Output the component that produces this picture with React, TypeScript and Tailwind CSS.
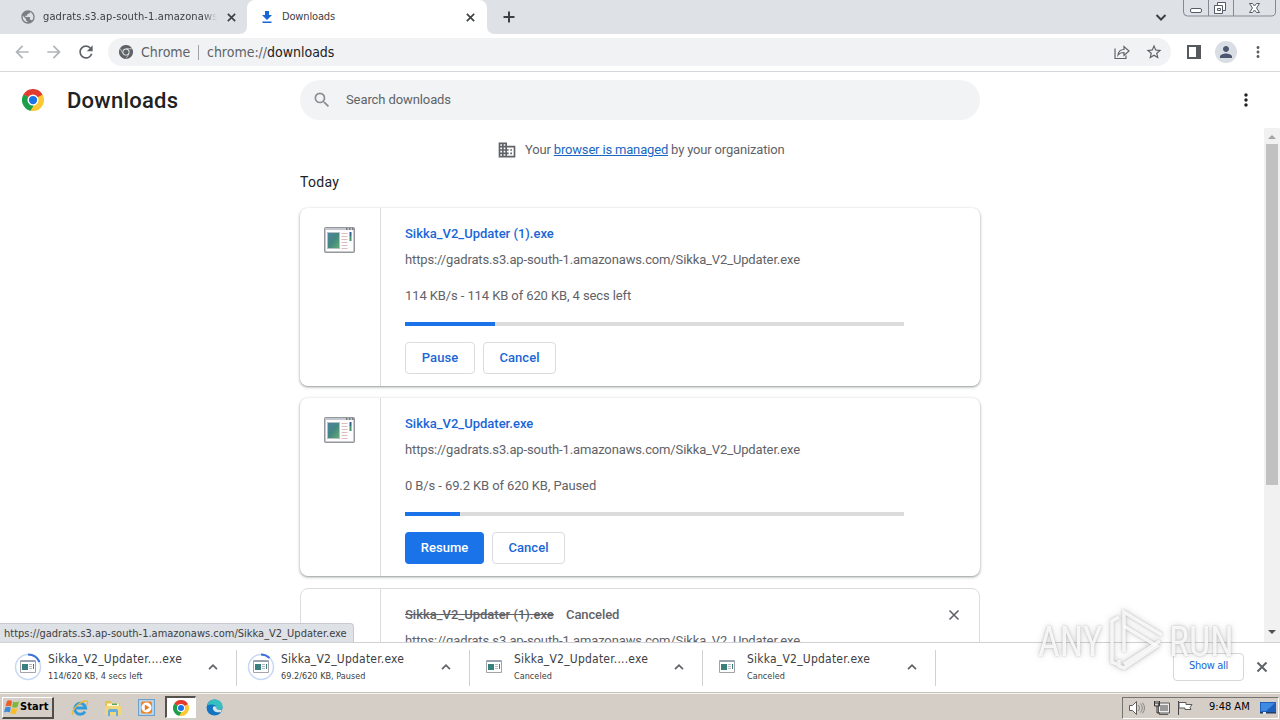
import type { ReactNode } from 'react';
import {
  MdArrowBack, MdArrowForward, MdRefresh, MdStarBorder, MdPerson, MdMoreVert, MdSearch,
  MdBusiness, MdPublic,
} from 'react-icons/md';

const URL_TEXT = 'https://gadrats.s3.ap-south-1.amazonaws.com/Sikka_V2_Updater.exe';

function Glyph({ d, className, width = 2 }: { d: string; className: string; width?: number }) {
  return (
    <svg className={className} viewBox="0 0 16 16" fill="none" stroke="currentColor" strokeWidth={width}>
      <path d={d} />
    </svg>
  );
}

const CROSS = 'M3.500 3.500l9 9M12.500 3.500l-9 9';
const PLUS = 'M8 2.500v11M2.500 8h11';
const UP = 'M3.500 10.500 8 6l4.500 4.500';
const DOWN = 'M3.500 6 8 10.500 12.500 6';

function ChromeLogo({ className, mono = false }: { className: string; mono?: boolean }) {
  const c = mono ? ['#5f6368', '#5f6368', '#5f6368', '#5f6368'] : ['#e33b2e', '#fcc934', '#1e9e4a', '#1a73e8'];
  const gap = mono ? '#f1f3f4' : 'none';
  return (
    <svg className={className} viewBox="0 0 48 48">
      <path d="M24 24 3.2 12A24 24 0 0 1 44.8 12Z" fill={c[0]} />
      <path d="M24 24 44.8 12A24 24 0 0 1 24 48Z" fill={c[1]} />
      <path d="M24 24V48A24 24 0 0 1 3.2 12Z" fill={c[2]} />
      <path d="M24 12H44.8L24 24Z" fill={c[0]} />
      <path d="M34.4 30 24 48 24 24Z" fill={c[1]} />
      <path d="M13.6 30 3.2 12 24 24Z" fill={c[2]} />
      <path d="M34.4 30 24 48H18L28 32Z" fill={c[1]} />
      <path d="M24 12.5H44M34 30 24 47M14 30 4 13" stroke={gap} strokeWidth="2" fill="none" />
      <circle cx="24" cy="24" r="12" fill={mono ? '#f1f3f4' : '#fff'} />
      <circle cx="24" cy="24" r="9" fill={c[3]} />
    </svg>
  );
}

function AppIcon({ className }: { className: string }) {
  return (
    <svg className={className} viewBox="0 0 31 26" preserveAspectRatio="none">
      <defs>
        <linearGradient id="pane" x1="0" y1="0" x2="1" y2="1">
          <stop offset="0" stopColor="#4c83a5" />
          <stop offset=".5" stopColor="#43877f" />
          <stop offset="1" stopColor="#64ad76" />
        </linearGradient>
      </defs>
      <rect x=".75" y=".75" width="29.5" height="24.5" rx="1" fill="#fdfdfd" stroke="#94979c" strokeWidth="1.5" />
      <path d="M1 2h29" stroke="#c3c7cd" strokeWidth="2" />
      <path d="M22 2h1.500M25 2h1.500M28 2h1.500" stroke="#5d6068" strokeWidth="1.500" />
      <rect x="3.500" y="5.500" width="12" height="16" fill="url(#pane)" stroke="#b9c0c4" />
      <path d="M17.500 6.500h6M17.500 9.500h6M17.500 12.500h6M17.500 15.500h6M17.500 18.500h6M17.500 21.500h6" stroke="#dcbcbc" />
      <path d="M26.500 5v4" stroke="#305f91" strokeWidth="2" />
      <path d="M26.500 9v5" stroke="#45936a" strokeWidth="2" />
    </svg>
  );
}

function SmallAppIcon() {
  return (
    <svg className="h-[13px] w-4" viewBox="0 0 16 13">
      <path d="M.5.5h15v12H.5z" fill="#fff" stroke="#a3a3a8" />
      <path d="M1 1.500h14" stroke="#8ea4bd" />
      <path d="M2 4h6v6H2z" fill="#38807d" />
      <path d="M9 4.500h3M9 6.500h3M9 8.500h3" stroke="#b4b9b9" />
      <path d="M13.500 4v5" stroke="#3f7f84" />
    </svg>
  );
}

function Card({ name, status, bar, action, primary }: {
  name: string; status: string; bar: ReactNode; action: string; primary?: boolean;
}) {
  return (
    <section className="flex h-[178px] shrink-0 rounded-lg bg-white shadow-[0_1px_2px_rgba(60,64,67,.4),0_1px_3px_1px_rgba(60,64,67,.15)]">
      <div className="flex w-[81px] justify-center border-r border-[#dadce0] pt-[19px]">
        <AppIcon className="ml-[-2px] h-[26px] w-[31px]" />
      </div>
      <div className="flex flex-1 flex-col pl-6 pt-4 text-[13px] leading-5 text-[#5f6368]">
        <a className="font-medium tracking-[0px] text-[#1a66d6]">{name}</a>
        <p className="mt-1.5 tracking-[-0.13px]">{URL_TEXT}</p>
        <p className="mt-4 tracking-[-0.1px]">{status}</p>
        <div className="mt-4 h-1 w-[499px] bg-[#dcdcdc]">{bar}</div>
        <div className="mt-4 flex gap-2 font-medium tracking-[0.05px]">
          <button className={primary
            ? 'h-8 w-[79px] rounded bg-[#1a73e8] text-white'
            : 'h-8 w-[70px] rounded border border-[#dadce0] text-[#1a66d6]'}>{action}</button>
          <button className="h-8 w-[73px] rounded border border-[#dadce0] text-[#1a66d6]">Cancel</button>
        </div>
      </div>
    </section>
  );
}

function ShelfItem({ name, sub, arc }: { name: string; sub: string; arc?: string }) {
  return (
    <div className="flex h-9 w-[233px] shrink-0 items-center border-r border-[#cfd1d4]">
      <div className="relative ml-[10px] mt-[-2px] flex h-7 w-7 items-center justify-center">
        <SmallAppIcon />
        {arc && (
          <svg className="absolute inset-0 h-7 w-7" viewBox="0 0 28 28" fill="none" strokeWidth="2">
            <circle cx="14" cy="14" r="12.500" stroke="#c6d8f5" strokeWidth="1.500" />
            <path d={arc} stroke="#3f72d8" />
          </svg>
        )}
      </div>
      <div className="ml-[6px] w-[150px] whitespace-nowrap text-[#3c4043]">
        <div className="h-[17px] text-[12px] leading-[17px] tracking-[0.22px]">{name}</div>
        <div className="h-[17px] text-[9px] leading-[17px] tracking-[0.04px]">{sub}</div>
      </div>
      <Glyph d={UP} className="ml-[8px] mt-[-2px] h-[14px] w-[14px] text-[#5f6368]" />
    </div>
  );
}

function TabStrip() {
  return (
    <div className="flex h-[34px] items-start bg-[#dee1e6] text-[11px] text-[#3c4043] [&>*]:shrink-0">
      <div className="flex h-[34px] w-[239px] items-center pl-5">
        <MdPublic className="h-4 w-4 shrink-0 text-[#7b7f84]" />
        <span className="ml-[7px] w-[174px] shrink-0 overflow-hidden whitespace-nowrap tracking-[0.12px] [mask-image:linear-gradient(to_right,black_92%,transparent)]">gadrats.s3.ap-south-1.amazonaws.com</span>
        <Glyph d={CROSS} className="ml-[8px] h-[13px] w-[13px] shrink-0" />
      </div>
      <svg className="h-[34px] w-2" viewBox="0 0 8 34"><path d="M0 34Q8 34 8 26V34Z" fill="#fff" /></svg>
      <div className="flex h-[34px] w-[240px] items-center rounded-t-lg bg-white">
        <svg className="ml-[13px] h-[14px] w-[14px]" viewBox="0 0 14 14"><path d="M5 1h4v4h3L7 10 2 5h3zM2.500 11.500h9v1.500h-9z" fill="#1967d2" /></svg>
        <span className="ml-2 w-[182px] tracking-[-0.15px]">Downloads</span>
        <Glyph d={CROSS} className="h-[13px] w-[13px]" />
      </div>
      <svg className="h-[34px] w-2" viewBox="0 0 8 34"><path d="M0 26Q0 34 8 34H0Z" fill="#fff" /></svg>
      <Glyph d={PLUS} className="ml-[6px] mt-[9px] h-4 w-4" />
      <Glyph d={DOWN} className="ml-[636px] mt-[9px] h-4 w-4" />
      <svg className="ml-[14px] h-[18px] w-[94px]" viewBox="0 0 94 18" fill="none" stroke="#555b66">
        <path d="M.5 0v12q0 4 4 4H88q4.500 0 4.500-4V0M25.500 0v16M50.500 0v16" stroke="#858994" />
        <rect x="7.500" y="8.500" width="11" height="4" rx="1.500" fill="#fff" />
        <path d="M34.500 2.500h8v8h-3v3h-8v-8h3zM34.500 8.500h3v2h-3zM34.500 5.500h5v5" fill="#fff" />
        <path d="m66.500 3.500h3l2 2.500 2-2.500h3l-3 4.500 3 4.500h-3l-2-2.500-2 2.500h-3l3-4.500z" fill="#fff" />
      </svg>
    </div>
  );
}

function Toolbar() {
  return (
    <div className="flex h-[38px] items-center border-b border-[#d5d7da] bg-white pb-px text-[#5f6368]">
      <MdArrowBack className="ml-3 h-5 w-5 text-[#b2b5b8]" />
      <MdArrowForward className="ml-3 h-5 w-5 text-[#b2b5b8]" />
      <MdRefresh className="ml-3 h-5 w-5" />
      <div className="ml-[12px] flex h-[28px] w-[1063px] items-center rounded-full bg-[#f0f2f4] text-[14px]">
        <ChromeLogo className="ml-[11px] h-[14px] w-[14px]" mono />
        <span className="ml-2 w-[57px] tracking-[0px]">Chrome</span>
        <span className="h-[15px] w-px bg-[#9ea2a7]" />
        <span className="ml-2 w-[907px] tracking-[-0.02px]">chrome://<span className="text-[#202124]">downloads</span></span>
        <svg className="h-[15px] w-4" viewBox="0 0 16 15" fill="none" stroke="#5f6368" strokeWidth="1.200"><path d="M1 3.500v10h11v-3M4 10c.5-4 3-5.500 6-5.500v-3l5 4.500-5 4.500v-3c-3 0-4.500.5-6 2.500z" /></svg>
        <MdStarBorder className="ml-[15px] h-[18px] w-[18px] shrink-0" />
      </div>
      <svg className="ml-[16px] h-[14px] w-[14px]" viewBox="0 0 14 14"><path d="M0 0h14v14H0zM2 2v10h7V2z" fill="#55595e" fillRule="evenodd" /></svg>
      <span className="ml-[14px] flex h-[22px] w-[22px] items-center justify-center rounded-full bg-[#d9dde4]"><MdPerson className="h-[18px] w-[18px] text-[#4b5670]" /></span>
      <MdMoreVert className="ml-[12px] h-[18px] w-[18px]" />
    </div>
  );
}

function Taskbar() {
  return (
    <footer className="flex h-7 items-center border-t border-[#c5c3be] bg-[#d5cec6] text-[11px] text-black shadow-[inset_0_1px_0_#f5f2ee]">
      <button className="ml-[2px] mt-[2px] flex h-[22px] w-[52px] items-center border border-b-2 border-r-2 border-[#fff] border-b-[#504c48] border-r-[#504c48] pl-px font-bold">
        <svg className="h-4 w-4 shrink-0" viewBox="0 0 16 16">
          <path d="M3 2q3-1.500 5 .2L7 7.500Q4.500 6 1.500 7.500z" fill="#ec5b2a" />
          <path d="M9 2.800q3 1.200 6-.5L13.500 8q-3 1.500-5.500 0z" fill="#7cb93b" />
          <path d="M1.300 8.500q3-1.500 5.500 0l-1 5Q3 12 0 13.500z" fill="#3c8ad8" />
          <path d="M7.800 9q2.500 1.500 5.500.3L12 14.500q-3 1.300-5.500-.3z" fill="#f6bd26" />
        </svg>
        <span className="tracking-[0.1px]">Start</span>
      </button>
      <svg className="ml-[17px] mt-[2px] h-[18px] w-[18px]" viewBox="0 0 18 18" fill="none">
        <path d="M14 12.500a5.500 5.500 0 1 1 .7-3.500H5" stroke="#2f9bdc" strokeWidth="2.800" />
        <path d="M2 15.500C-.5 13 7 3.500 14 2q4-.5 2 4" stroke="#e9b93c" strokeWidth="1.300" />
      </svg>
      <svg className="ml-[15px] mt-[2px] h-[18px] w-[18px]" viewBox="0 0 18 18">
        <path d="M1 2h6l1 2h8v11H1z" fill="#e3c05c" /><path d="M3 4.500h12V9H3z" fill="#fff6cf" /><path d="M8 4.500h5v1.500H8z" fill="#58a860" />
        <path d="M1 7h16v9H1z" fill="#f1d67c" /><path d="M4 17v-5q0-2 2-2h6q2 0 2 2v5h-2v-4H6v4z" fill="#64aedb" />
      </svg>
      <svg className="ml-[16px] mt-[2px] h-[17px] w-[17px]" viewBox="0 0 17 17">
        <rect x=".5" y=".5" width="16" height="16" fill="#b6d3ea" stroke="#6f9ec7" /><rect x="3" y="2.500" width="11" height="12" rx="2" fill="#f08220" />
        <circle cx="8.500" cy="8.500" r="5" fill="#fff" /><path d="m6.800 5.500 4.700 3-4.700 3z" fill="#e9781c" />
      </svg>
      <span className="ml-[10px] mt-[1px] flex h-[22px] w-[31px] items-center justify-center border border-l-2 border-t-2 border-white border-l-[#55514d] border-t-[#55514d] bg-white"><ChromeLogo className="h-4 w-4" /></span>
      <svg className="ml-[10px] mt-[2px] h-[17px] w-[17px]" viewBox="0 0 17 17">
        <circle cx="8.500" cy="8.500" r="8" fill="#1474c4" />
        <path d="M1 7C2 2 6 .5 9 .5c5 0 8 4 7.500 7.500-.3 2-2 3-4.500 3-1.500 0-2-.7-1.500-1.800C11 6 5 4 1 7z" fill="#37bfc0" />
        <path d="M7 8c-1 4 3 6 8 5l1-2.500c-2.500 1-6 .5-5.500-1.500C10.500 7.500 8 6.500 7 8z" fill="#d5e5e5" />
      </svg>
      <div className="ml-auto mr-px mt-[2px] flex h-[22px] w-[157px] items-center border border-white border-l-[#77736e] border-t-[#77736e]">
        <svg className="ml-[5px] h-4 w-[68px]" viewBox="0 0 68 16" fill="none" stroke="#5b5b5b">
          <path d="M1.500 5.500h3l4-4v13l-4-4h-3z" fill="#fff" /><path d="M10.500 5q2 3 0 6M12.500 3.500q3.500 4.500 0 9M14.500 2.500q4 5.500 0 11" stroke="#888" />
          <path d="M30.500 3h11v10h-11zM31 14.500h9" fill="#eee" /><path d="M32 5h8v6h-8z" fill="#999" stroke="none" /><path d="M26.500 1v5h5V1M28 1v3M30 1v3M29 6v7h3" stroke="#333" />
          <path d="M50.500 1v14" stroke="#444" /><path d="M51 2.500h7v2h6l-2 3 1 2h-6v-1.500h-6z" fill="#fff" />
        </svg>
        <span className="ml-[13px] w-[44px] whitespace-nowrap tracking-[0px]">9:48 AM</span>
        <svg className="ml-[7px] h-[14px] w-4" viewBox="0 0 16 14"><path d="M0 1h16v10H0z" fill="#1e5fbd" /><path d="M1 2h14l-9 8H1z" fill="#3d8be0" /><path d="M0 11h16v1.500H0z" fill="#233c61" /><path d="M3 11h3v2H3z" fill="#dfe9f5" /></svg>
      </div>
    </footer>
  );
}

function Watermark() {
  return (
    <div className="pointer-events-none absolute left-[1038px] top-[608px] z-20 flex h-[66px] w-[196px] items-center font-['Roboto'] text-[43px] font-normal leading-none text-white/85 [filter:drop-shadow(0_0_1px_rgba(90,90,90,.4))_drop-shadow(0_0_3px_rgba(90,90,90,.3))] [font-stretch:condensed]">
      <span className="w-[69px]"><span className="inline-block origin-left scale-x-[.88]">ANY</span></span>
      <svg className="h-[66px] w-[62px] shrink-0" viewBox="0 0 62 66" fill="none" stroke="#fff" strokeOpacity=".85" strokeWidth="3.500">
        <path d="M17 44V4L55 27M53 33 17 56" />
        <path d="m17 18 33 20-33 22-5-2v-6M12 9 5 13v41l7 3" />
      </svg>
      <span className="w-[62px]"><span className="inline-block origin-left scale-x-[.88]">RUN</span></span>
    </div>
  );
}

export default function App() {
  return (
    <div className="relative flex h-[720px] w-[1280px] flex-col overflow-hidden bg-white font-['DejaVu_Sans_Condensed','DejaVu_Sans',sans-serif] [font-stretch:condensed]">
      <TabStrip />
      <Toolbar />
      <header className="flex h-14 shrink-0 items-center font-['Roboto',sans-serif] [font-stretch:normal]">
        <ChromeLogo className="ml-[22px] h-[22px] w-[22px]" />
        <h1 className="ml-[23px] w-[233px] text-[22px] font-medium tracking-[0.25px] text-[#202124]">Downloads</h1>
        <div className="flex h-10 w-[680px] items-center rounded-full bg-[#f1f3f4] text-[13px] text-[#5f6368]">
          <MdSearch className="ml-3 h-5 w-5 text-[#8a8d91]" />
          <span className="ml-[14px] tracking-[-0.1px]">Search downloads</span>
        </div>
        <MdMoreVert className="ml-[256px] h-5 w-5 text-[#202124]" />
      </header>
      <main className="flex h-[514px] shrink-0 overflow-hidden font-['Roboto',sans-serif] [font-stretch:normal]">
        <div className="flex w-[1264px] flex-col pl-[300px] pr-[284px]">
          <div className="flex h-11 shrink-0 items-center pl-[197px] text-[13px] text-[#5f6368]">
            <MdBusiness className="h-5 w-5" />
            <span className="ml-2 whitespace-nowrap tracking-[-0.17px]">Your <a className="text-[#1967c2] underline">browser is managed</a> by your organization</span>
          </div>
          <h2 className="mb-[15px] h-[21px] shrink-0 text-[14px] font-normal leading-[21px] tracking-[0.3px] text-[#202124]">Today</h2>
          <div className="flex flex-col gap-3">
            <Card name="Sikka_V2_Updater (1).exe" status="114 KB/s - 114 KB of 620 KB, 4 secs left" bar={<div className="h-1 w-[90px] bg-[#1a73e8]" />} action="Pause" />
            <Card name="Sikka_V2_Updater.exe" status="0 B/s - 69.2 KB of 620 KB, Paused" bar={<div className="h-1 w-[55px] bg-[#1a73e8]" />} action="Resume" primary />
            <section className="flex h-[178px] shrink-0 rounded-lg border border-[#dadce0]">
              <div className="w-20 border-r border-[#dadce0]" />
              <div className="flex-1 pl-6 pt-4 text-[13px] leading-5 text-[#5f6368]">
                <div className="flex items-center">
                  <span className="w-[161px] whitespace-nowrap font-medium tracking-[0px]"><span className="line-through">Sikka_V2_Updater (1).exe</span></span>
                  <span className="w-[380px] font-medium tracking-[-0.1px]">Canceled</span>
                  <Glyph d={CROSS} width={1.6} className="h-4 w-4" />
                </div>
                <p className="mt-1.5 tracking-[-0.13px]">{URL_TEXT}</p>
              </div>
            </section>
          </div>
        </div>
        <div className="flex w-4 flex-col items-center bg-[#f1f1f1]">
          <svg className="h-4 w-4 shrink-0" viewBox="0 0 16 16"><path d="m4 11 4-4 4 4z" fill="#a3a3a3" /></svg>
          <div className="h-[341px] w-3 bg-[#c1c1c1]" />
          <svg className="mt-auto mb-px h-4 w-4 shrink-0" viewBox="0 0 16 16"><path d="m4 5 4 4 4-4z" fill="#505050" /></svg>
        </div>
      </main>
      <div className="flex h-[50px] shrink-0 items-center border-t border-[#cfd1d4] bg-white pl-1">
        <ShelfItem name="Sikka_V2_Updater....exe" sub="114/620 KB, 4 secs left" arc="M14 1.500A12.500 12.500 0 0 1 25.500 9" />
        <ShelfItem name="Sikka_V2_Updater.exe" sub="69.2/620 KB, Paused" arc="M14 1.500A12.500 12.500 0 0 1 22.500 5" />
        <ShelfItem name="Sikka_V2_Updater....exe" sub="Canceled" />
        <ShelfItem name="Sikka_V2_Updater.exe" sub="Canceled" />
        <button className="mt-[-2px] ml-[237px] h-7 w-[71px] shrink-0 rounded border border-[#d5d7da] text-[11px] tracking-[-0.3px] text-[#1967d2]">Show all</button>
        <Glyph d={CROSS} className="mt-[-2px] ml-[10px] h-4 w-4 shrink-0 text-[#5f6368]" />
      </div>
      <Taskbar />
      <div className="absolute left-0 top-[623px] h-[19px] w-[354px] overflow-hidden whitespace-nowrap rounded-tr border-r border-t border-[#c7cacf] bg-[#dee1e6] pl-1 text-[11px] leading-[19px] text-[#3c4043]">{URL_TEXT}</div>
      <Watermark />
    </div>
  );
}
